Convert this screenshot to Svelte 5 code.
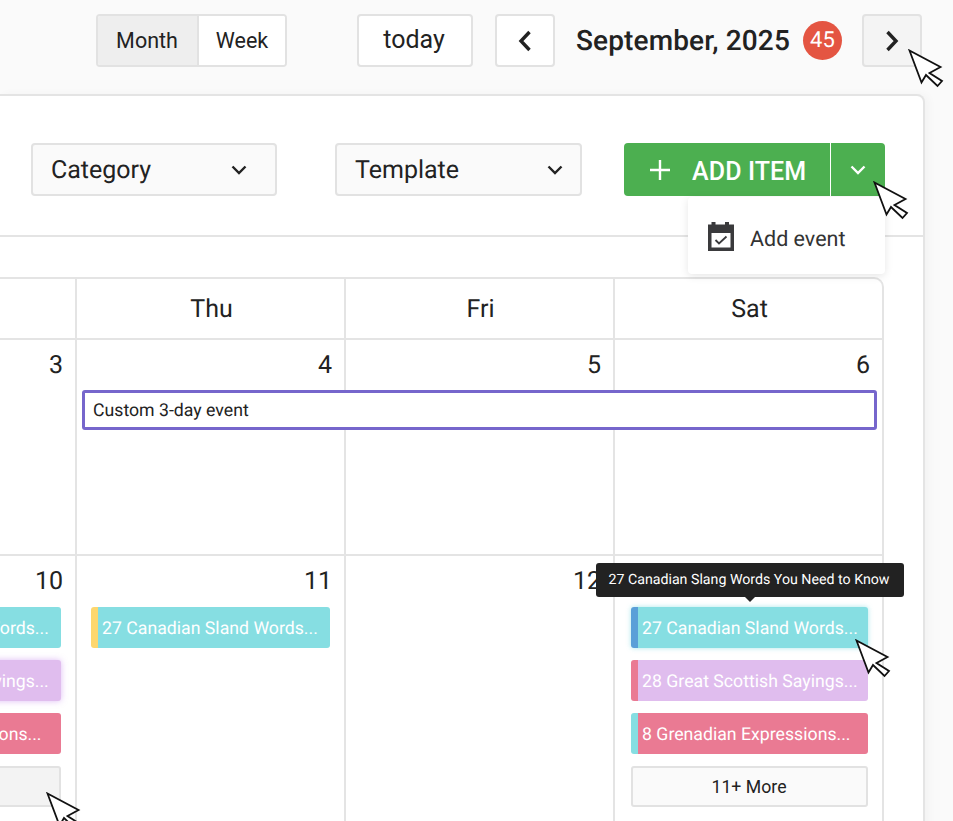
<script>
	const weekOne = [{ day: 3 }, { day: 4 }, { day: 5 }, { day: 6 }];

	const teal = '#86dee2';
	const lilac = '#e0bdee';
	const pink = '#ea7a93';

	const weekTwo = [
		{
			day: 10,
			more: '',
			events: [
				{ title: '27 Canadian Sland Words...', bg: teal, tag: '#5a9fd8' },
				{ title: '28 Great Scottish Sayings...', bg: lilac, tag: pink, glow: true },
				{ title: '8 Grenadian Expressions...', bg: pink, tag: teal }
			],
			ghost: true
		},
		{ day: 11, events: [{ title: '27 Canadian Sland Words...', bg: teal, tag: '#fdd76e' }] },
		{ day: 12, events: [] },
		{
			day: 13,
			more: '11+ More',
			events: [
				{ title: '27 Canadian Sland Words...', bg: teal, tag: '#5a9fd8', hover: true },
				{ title: '28 Great Scottish Sayings...', bg: lilac, tag: pink },
				{ title: '8 Grenadian Expressions...', bg: pink, tag: teal }
			]
		}
	];
</script>

{#snippet cursor(cls)}
	<svg class="cursor {cls}" width="38" height="40" viewBox="0 0 38 40">
		<path d="M1.5 1.5 32.5 18 21.5 24 34 32 29.500 37 18 26 13.500 33.500Z" fill="#fff" stroke="#111" stroke-width="1.800" stroke-linejoin="miter" />
	</svg>
{/snippet}

{#snippet chevronDown(cls)}
	<svg class={cls} width="16" height="10" viewBox="0 0 16 10">
		<path d="M1.500 1.500 8 8l6.500-6.500" fill="none" stroke="currentColor" stroke-width="2.400" />
	</svg>
{/snippet}

<div class="page">
	<header class="topbar">
		<div class="view-switch">
			<button class="active">Month</button>
			<button>Week</button>
		</div>
		<button class="btn today">today</button>
		<button class="btn nav" aria-label="Previous">
			<svg width="14" height="22" viewBox="0 0 14 22"><path d="M11.500 2 3 11l8.500 9" fill="none" stroke="#222" stroke-width="3.400" /></svg>
		</button>
		<h1>September, 2025</h1>
		<span class="badge">45</span>
		<button class="btn nav next" aria-label="Next">
			<svg width="14" height="22" viewBox="0 0 14 22"><path d="M2.500 2 11 11l-8.500 9" fill="none" stroke="#222" stroke-width="3.400" /></svg>
		</button>
		{@render cursor('cursor-next')}
	</header>

	<main class="card">
		<section class="filters">
			<div class="select category">
				<span>Category</span>
				{@render chevronDown('')}
			</div>
			<div class="select template">
				<span>Template</span>
				{@render chevronDown('')}
			</div>
			<div class="add">
				<button class="add-main">
					<svg width="20" height="20" viewBox="0 0 20 20"><path d="M10 0v20M0 10h20" stroke="#fff" stroke-width="2.400" /></svg>
					<span>ADD ITEM</span>
				</button>
				<button class="add-toggle" aria-label="More">{@render chevronDown('')}</button>
				<div class="menu">
					<svg width="26" height="29" viewBox="0 0 26 29">
						<path d="M0 2.500h26V29H0z" fill="#3a3a3c" />
						<path d="M3.500 0h4v5h-4zM17 0h4v5h-4z" fill="#3a3a3c" />
						<path d="M3.500 11h19v14.500h-19z" fill="#fff" />
						<path d="m7.500 18 3.500 3.500 7.500-7" fill="none" stroke="#3a3a3c" stroke-width="1.800" />
					</svg>
					<span>Add event</span>
				</div>
				{@render cursor('cursor-add')}
			</div>
		</section>

		<section class="calendar">
			<div class="heads">
				<div>Wed</div>
				<div>Thu</div>
				<div>Fri</div>
				<div>Sat</div>
			</div>

			<div class="week first">
				{#each weekOne as cell}
					<div class="cell"><div class="date">{cell.day}</div></div>
				{/each}
				<div class="span-event">Custom 3-day event</div>
			</div>

			<div class="week">
				{#each weekTwo as cell}
					<div class="cell">
						<div class="date">{cell.day}</div>
						<div class="events">
							{#each cell.events as ev}
								<div class="event" class:glow={ev.glow} class:hover={ev.hover} style="background:{ev.bg};--tag:{ev.tag}">
									<span>{ev.title}</span>
									{#if ev.hover}
										<div class="tooltip">27 Canadian Slang Words You Need to Know</div>
										{@render cursor('cursor-event')}
									{/if}
								</div>
							{/each}
							{#if cell.more}
								<button class="more">{cell.more}</button>
							{/if}
							{#if cell.ghost}
								<button class="more ghost" aria-label="More"></button>
								{@render cursor('cursor-more')}
							{/if}
						</div>
					</div>
				{/each}
			</div>
		</section>
	</main>
</div>

<style>
	:global(body) {
		margin: 0;
		background: #fafafa;
		overflow: hidden;
		font-family: Roboto, "Liberation Sans", sans-serif;
		color: #222;
		text-rendering: geometricPrecision;
	}

	button {
		font: inherit;
		color: inherit;
		padding: 0;
		cursor: pointer;
	}

	.page {
		width: 953px;
		height: 821px;
		overflow: hidden;
		position: relative;
	}

	.topbar {
		position: relative;
		height: 94px;
		box-sizing: border-box;
		padding: 14px 31px 0 96px;
		display: flex;
		align-items: flex-start;
	}

	.view-switch {
		display: flex;
		height: 53px;
		box-sizing: border-box;
		border: 2px solid #e2e2e2;
		border-radius: 4px;
		overflow: hidden;
		background: #fff;
	}

	.view-switch button {
		border: 0;
		background: #fff;
		font-size: 21.500px;
		width: 86px;
	}

	.view-switch .active {
		width: 101px;
		padding-right: 1px;
		background: #eee;
		border-right: 2px solid #e2e2e2;
	}

	.btn {
		height: 53px;
		box-sizing: border-box;
		border: 2px solid #e2e2e2;
		border-radius: 4px;
		background: #fff;
	}

	.today {
		width: 116px;
		margin-left: 70px;
		padding: 0 2px 2px 0;
		font-size: 25px;
	}

	.nav {
		width: 60px;
		margin-left: 22px;
		display: flex;
		align-items: center;
		justify-content: center;
	}

	.nav.next {
		margin-left: 20px;
		background: #f4f4f4;
	}

	h1 {
		margin: 0 0 0 21px;
		font-size: 28px;
		font-weight: 500;
		line-height: 53px;
		letter-spacing: 0.13px;
	}

	.badge {
		width: 39px;
		height: 39px;
		margin: 7px 0 0 13px;
		border-radius: 50%;
		background: #e45542;
		color: #fff;
		font-size: 22px;
		line-height: 39px;
		text-align: center;
	}

	.cursor {
		position: absolute;
		z-index: 5;
	}

	.cursor-next {
		left: 908px;
		top: 49px;
	}

	.card {
		width: 925px;
		height: 740px;
		box-sizing: border-box;
		background: #fff;
		border: 2px solid #e4e4e4;
		border-left: 0;
		border-radius: 0 8px 0 0;
		box-shadow: 4px 0 8px rgba(0, 0, 0, 0.03);
	}

	.filters {
		height: 141px;
		box-sizing: border-box;
		border-bottom: 2px solid #e4e4e4;
		padding: 47px 0 0 31px;
		display: flex;
		align-items: flex-start;
	}

	.select {
		height: 53px;
		box-sizing: border-box;
		border: 2px solid #e2e2e2;
		border-radius: 4px;
		background: #fafafa;
		padding: 0 28px 0 18px;
		display: flex;
		align-items: center;
		justify-content: space-between;
		font-size: 25px;
	}

	.select span {
		padding-top: 2px;
	}

	.category {
		width: 246px;
	}

	.template {
		width: 247px;
		margin-left: 58px;
		padding-right: 17px;
	}

	.add {
		position: relative;
		display: flex;
		margin-left: 42px;
		height: 53px;
		color: #fff;
	}

	.add button {
		border: 0;
		background: #4caf50;
		display: flex;
		align-items: center;
		height: 100%;
	}

	.add-main {
		width: 206px;
		border-radius: 4px 0 0 4px;
		padding-left: 26px !important;
		gap: 22px;
		font-size: 25px;
		font-weight: 500;
		letter-spacing: 0.12px;
	}

	.add-main span {
		padding-top: 3px;
	}

	.add-toggle {
		width: 54px;
		margin-left: 1px;
		border-radius: 0 4px 4px 0;
		justify-content: center;
	}

	.menu {
		position: absolute;
		left: 64px;
		top: 54px;
		width: 197px;
		height: 77px;
		box-sizing: border-box;
		padding-left: 20px;
		display: flex;
		align-items: center;
		gap: 16px;
		background: #fff;
		color: #333;
		border-radius: 4px;
		box-shadow: 0 2px 8px rgba(0, 0, 0, 0.1);
		font-size: 21.500px;
		z-index: 3;
	}

	.menu svg {
		margin-top: 2px;
	}

	.menu span {
		padding-top: 7px;
	}

	.cursor-add {
		left: 249px;
		top: 38px;
	}

	.calendar {
		margin: 40px 0 0 -192px;
		width: 1076px;
		box-sizing: border-box;
		border-top: 2px solid #e4e4e4;
		border-right: 2px solid #e4e4e4;
		border-radius: 0 10px 0 0;
	}

	.heads,
	.week {
		display: grid;
		grid-template-columns: 269px 269px 269px 1fr;
	}

	.heads {
		height: 59px;
		border-bottom: 2px solid #e4e4e4;
	}

	.heads div {
		display: flex;
		align-items: center;
		justify-content: center;
		font-size: 25px;
		padding: 2px 0 0 2px;
		border-right: 2px solid #e4e4e4;
	}

	.heads div:last-child,
	.cell:nth-child(4) {
		border-right: 0;
	}

	.week {
		grid-template-rows: 50px 40px 1fr;
		height: 214px;
		border-bottom: 2px solid #e4e4e4;
	}

	.week:last-child {
		height: 300px;
		border-bottom: 0;
	}

	.cell {
		grid-row: 1 / -1;
		border-right: 2px solid #e4e4e4;
		padding: 0 14px;
	}

	.cell:nth-child(1) { grid-column: 1; }
	.cell:nth-child(2) { grid-column: 2; }
	.cell:nth-child(3) { grid-column: 3; }
	.cell:nth-child(4) { grid-column: 4; padding-left: 16px; }

	.date {
		font-size: 25px;
		line-height: 24px;
		padding-top: 14px;
		margin-right: -2px;
		text-align: right;
	}

	.span-event {
		grid-row: 2;
		grid-column: 2 / 5;
		margin: 0 5px;
		box-sizing: border-box;
		height: 40px;
		border: 3px solid #7666cc;
		border-radius: 3px;
		padding-left: 8px;
		font-size: 17.700px;
		line-height: 36px;
		background: #fff;
		z-index: 1;
	}

	.events {
		margin-top: 13px;
		display: flex;
		flex-direction: column;
		gap: 12px;
		position: relative;
	}

	.event {
		position: relative;
		height: 41px;
		box-sizing: border-box;
		border-radius: 3px;
		border-left: 7px solid var(--tag);
		padding-left: 4px;
		color: #fff;
		font-size: 17.700px;
		line-height: 44px;
		white-space: nowrap;
	}

	.event.glow {
		box-shadow: 0 0 6px rgba(190, 120, 235, 0.5);
	}

	.event.hover {
		box-shadow: 0 0 5px rgba(134, 222, 226, 0.7);
	}

	.more {
		height: 41px;
		box-sizing: border-box;
		border: 2px solid #e2e2e2;
		border-radius: 3px;
		background: #fafafa;
		font-size: 17.700px;
		padding-right: 1px;
	}

	.more.ghost {
		background: #f3f3f3;
	}

	.cursor-more {
		left: 224px;
		top: 185px;
	}

	.tooltip {
		position: absolute;
		left: -42px;
		top: -44px;
		width: 308px;
		height: 34px;
		box-sizing: border-box;
		padding-right: 2px;
		background: #222;
		color: #fff;
		border-radius: 3px;
		font-size: 14.200px;
		line-height: 35px;
		text-align: center;
		z-index: 4;
	}

	.tooltip::after {
		content: '';
		position: absolute;
		left: 148px;
		bottom: -5px;
		border: 6px solid transparent;
		border-top-color: #222;
		border-bottom: 0;
	}

	.cursor-event {
		left: 217px;
		top: 32px;
	}
</style>
